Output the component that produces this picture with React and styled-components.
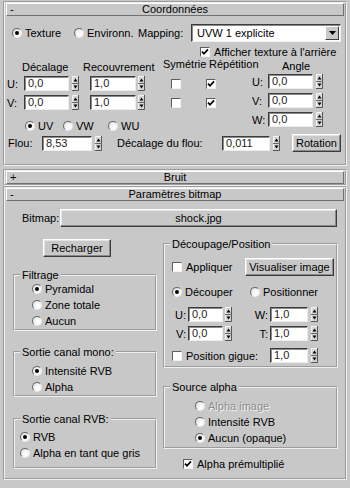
import React from 'react'
import styled, { createGlobalStyle } from 'styled-components'

const GlobalStyle = createGlobalStyle`
  html, body {
    margin: 0;
    padding: 0;
    background: #c8c8c8;
  }
  body {
    font-family: "Liberation Sans", Arial, sans-serif;
    font-size: 11px;
    color: #000;
  }
`

const Page = styled.div`
  width: 350px;
  height: 488px;
  box-sizing: border-box;
  padding: 1px 3px 0;
  background: #c8c8c8;
  overflow: hidden;
`

const Rollout = styled.section`
  border: 2px groove #f0f0f0;
  margin-top: ${p => p.$mt || 0}px;
  padding-bottom: ${p => p.$pb || 0}px;
`

const Header = styled.div`
  height: 13px;
  box-sizing: border-box;
  margin: 0 1px;
  border: 1px solid;
  border-color: #ffffff #707070 #707070 #ffffff;
  display: grid;
  grid-template-columns: 16px 1fr 16px;
  align-items: center;
  line-height: 11px;
`

const Sign = styled.span`
  padding-left: 3px;
`

const Title = styled.span`
  text-align: center;
`

const Row = styled.div`
  display: flex;
  align-items: ${p => p.$align || 'center'};
  height: ${p => p.$h}px;
  margin-top: ${p => p.$mt || 0}px;
`

const Block = styled.div`
  display: flex;
  flex-direction: column;
  width: ${p => (p.$w ? p.$w + 'px' : 'auto')};
  flex: none;
`

const Text = styled.span`
  display: inline-block;
  flex: none;
  width: ${p => (p.$w ? p.$w + 'px' : 'auto')};
  margin-left: ${p => p.$ml || 0}px;
  padding-top: ${p => p.$pt || 0}px;
  line-height: 12px;
  text-align: ${p => (p.$right ? 'right' : 'left')};
  white-space: nowrap;
`

const Option = styled.label`
  display: flex;
  align-items: center;
  gap: 3px;
  flex: none;
  width: ${p => (p.$w ? p.$w + 'px' : 'auto')};
  height: 14px;
  margin-left: ${p => p.$ml || 0}px;
  white-space: nowrap;
  color: ${p => (p.$disabled ? '#8e8e8e' : '#000')};
  text-shadow: ${p => (p.$disabled ? '1px 1px 0 #f4f4f4' : 'none')};
`

const Dot = styled.span`
  width: 10px;
  height: 10px;
  box-sizing: border-box;
  flex: none;
  border-radius: 50%;
  border: 1px solid;
  border-color: #6a6a6a #ececec #ececec #6a6a6a;
  background: radial-gradient(circle at 65% 65%, #ffffff 0, #f4f4f4 45%, #cfcfcf 100%);
  display: flex;
  align-items: center;
  justify-content: center;
  &::after {
    content: '';
    width: 4px;
    height: 4px;
    border-radius: 50%;
    background: #000;
    display: ${p => (p.$on ? 'block' : 'none')};
  }
`

const Box = styled.span`
  width: 10px;
  height: 10px;
  box-sizing: border-box;
  flex: none;
  margin-left: ${p => p.$ml || 0}px;
  background: #fff;
  border: 1px solid;
  border-color: #5e5e5e #f2f2f2 #f2f2f2 #5e5e5e;
  display: flex;
  align-items: center;
  justify-content: center;
`

const Field = styled.span`
  width: ${p => p.$w}px;
  height: 15px;
  box-sizing: border-box;
  flex: none;
  margin-left: ${p => p.$ml || 0}px;
  background: #fff;
  border: 1px solid;
  border-color: #3c3c3c #ececec #ececec #3c3c3c;
  box-shadow: inset 1px 1px 0 #8a8a8a;
  padding-left: 3px;
  line-height: 13px;
  color: #222;
`

const ArrowBox = styled.span`
  display: flex;
  flex: none;
  margin-left: ${p => p.$gap ?? 3}px;
`

const Button = styled.div`
  width: ${p => p.$w}px;
  height: ${p => p.$h || 18}px;
  box-sizing: border-box;
  flex: none;
  margin-left: ${p => p.$ml || 0}px;
  margin-top: ${p => p.$mt || 0}px;
  border: 1px solid;
  border-color: #ffffff #3c3c3c #3c3c3c #ffffff;
  box-shadow: inset -1px -1px 0 #8a8a8a, inset 1px 1px 0 #e4e4e4;
  display: flex;
  align-items: center;
  justify-content: center;
  white-space: nowrap;
`

const Select = styled.div`
  width: 150px;
  height: 18px;
  box-sizing: border-box;
  flex: none;
  display: flex;
  align-items: center;
  background: #fff;
  border: 1px solid;
  border-color: #3c3c3c #f0f0f0 #f0f0f0 #3c3c3c;
  box-shadow: inset 1px 1px 0 #8a8a8a;
`

const SelectValue = styled.span`
  flex: 1;
  padding-left: 5px;
`

const SelectButton = styled.span`
  width: 14px;
  height: 14px;
  box-sizing: border-box;
  margin-right: 1px;
  background: #c8c8c8;
  border: 1px solid;
  border-color: #ffffff #3c3c3c #3c3c3c #ffffff;
  display: flex;
  align-items: center;
  justify-content: center;
`

const Columns = styled.div`
  display: flex;
  gap: 6px;
  padding-left: 8px;
`

const Group = styled.fieldset`
  width: ${p => p.$w}px;
  box-sizing: border-box;
  min-width: 0;
  margin: ${p => p.$mt || 0}px 0 0 0;
  padding: ${p => p.$pt || 0}px 0 ${p => p.$pb || 0}px 0;
  border: 2px groove #f0f0f0;
`

const Legend = styled.legend`
  padding: 0 2px;
  margin-left: 5px;
  line-height: 12px;
  font-size: 11px;
`

function Radio({ on, disabled, label, w, ml }) {
  return (
    <Option $w={w} $ml={ml} $disabled={disabled}>
      <Dot $on={on} />
      {label}
    </Option>
  )
}

function CheckBox({ on, ml }) {
  return (
    <Box $ml={ml}>
      {on && (
        <svg width="8" height="8" viewBox="0 0 8 8">
          <path d="M1 3.6 L3 5.8 L7 1.4" stroke="#000" strokeWidth="1.7" fill="none" />
        </svg>
      )}
    </Box>
  )
}

function Checked({ on, label, w, ml }) {
  return (
    <Option $w={w} $ml={ml}>
      <CheckBox on={on} />
      <span style={{ marginLeft: 1 }}>{label}</span>
    </Option>
  )
}

function Spinner({ value, w, ml, gap }) {
  return (
    <>
      <Field $w={w} $ml={ml}>{value}</Field>
      <ArrowBox $gap={gap}>
        <svg width="7" height="15" viewBox="0 0 7 15">
          <rect x="0" y="0" width="7" height="15" fill="#d6d6d6" />
          <path d="M0.5 15V0.5H7" stroke="#f4f4f4" fill="none" />
          <path d="M0 14.5H6.5V0" stroke="#555" fill="none" />
          <path d="M0 7.5H7" stroke="#666" />
          <path d="M1.5 5.5L3.5 2.5L5.5 5.5Z" fill="#000" />
          <path d="M1.5 9.5L3.5 12.5L5.5 9.5Z" fill="#000" />
        </svg>
      </ArrowBox>
    </>
  )
}

function RolloutHeader({ open, title }) {
  return (
    <Header>
      <Sign>{open ? '-' : '+'}</Sign>
      <Title>{title}</Title>
      <span />
    </Header>
  )
}

function Coordinates() {
  return (
    <Rollout $pb={12}>
      <RolloutHeader open title="Coordonnées" />
      <Row $h={18} $mt={8}>
        <Radio on label="Texture" ml={7} w={62} />
        <Radio label="Environn." w={64} />
        <Text $w={53}>Mapping:</Text>
        <Select>
          <SelectValue>UVW 1 explicite</SelectValue>
          <SelectButton>
            <svg width="7" height="4" viewBox="0 0 7 4">
              <path d="M0 0H7L3.5 4Z" fill="#000" />
            </svg>
          </SelectButton>
        </Select>
      </Row>
      <Row $h={12} $mt={4}>
        <Checked on label="Afficher texture à l'arrière" ml={195} />
      </Row>
      <Row $h={74} $align="flex-start">
        <Block $w={240}>
          <Row $h={18} $align="flex-start">
            <Text $ml={17} $w={61} $pt={3}>Décalage</Text>
            <Text $w={80} $pt={3}>Recouvrement</Text>
            <Text $w={46}>Symétrie</Text>
            <Text>Répétition</Text>
          </Row>
          {[['U:', false], ['V:', false]].map(([axis, sym], i) => (
            <Row key={axis} $h={15} $mt={i ? 4 : 0}>
              <Text $ml={2} $w={17}>{axis}</Text>
              <Spinner value="0,0" w={45} gap={3} />
              <Spinner value="1,0" w={46} ml={11} gap={2} />
              <CheckBox on={sym} ml={26} />
              <CheckBox on ml={25} />
            </Row>
          ))}
          <Row $h={12} $mt={10}>
            <Radio on label="UV" ml={20} w={38} />
            <Radio label="VW" w={45} />
            <Radio label="WU" />
          </Row>
        </Block>
        <Block>
          <Row $h={12} $mt={2}>
            <Text $ml={37}>Angle</Text>
          </Row>
          {['U:', 'V:', 'W:'].map((axis, i) => (
            <Row key={axis} $h={15} $mt={i ? 4 : 2}>
              <Text $ml={7} $w={16}>{axis}</Text>
              <Spinner value="0,0" w={45} gap={3} />
            </Row>
          ))}
        </Block>
      </Row>
      <Row $h={18} $mt={2}>
        <Text $ml={3} $w={34}>Flou:</Text>
        <Spinner value="8,53" w={50} gap={3} />
        <Text $ml={15} $w={105}>Décalage du flou:</Text>
        <Spinner value="0,011" w={48} gap={3} />
        <Button $w={49} $ml={12}>Rotation</Button>
      </Row>
    </Rollout>
  )
}

function BitmapParams() {
  return (
    <Rollout $pb={7}>
      <RolloutHeader open title="Paramètres bitmap" />
      <Row $h={18} $mt={8}>
        <Text $ml={17} $w={38}>Bitmap:</Text>
        <Button $w={277}>shock.jpg</Button>
      </Row>
      <Columns>
        <Block $w={144}>
          <Button $w={68} $ml={30} $mt={12}>Recharger</Button>
          <Group $w={144} $mt={12}>
            <Legend>Filtrage</Legend>
            {['Pyramidal', 'Zone totale', 'Aucun'].map((l, i) => (
              <Row key={l} $h={16}>
                <Radio on={i === 0} label={l} ml={17} />
              </Row>
            ))}
          </Group>
          <Group $w={144} $mt={15} $pt={5}>
            <Legend>Sortie canal mono:</Legend>
            <Row $h={16}><Radio on label="Intensité RVB" ml={17} /></Row>
            <Row $h={16}><Radio label="Alpha" ml={17} /></Row>
          </Group>
          <Group $w={144} $mt={16} $pt={4} $pb={6}>
            <Legend>Sortie canal RVB:</Legend>
            <Row $h={16}><Radio on label="RVB" ml={5} /></Row>
            <Row $h={16}><Radio label="Alpha en tant que gris" ml={5} /></Row>
          </Group>
        </Block>
        <Block $w={175}>
          <Group $w={175} $mt={11} $pt={8} $pb={3}>
            <Legend>Découpage/Position</Legend>
            <Row $h={18}>
              <Checked label="Appliquer" ml={7} w={73} />
              <Button $w={89}>Visualiser image</Button>
            </Row>
            <Row $h={14} $mt={9}>
              <Radio on label="Découper" ml={7} w={78} />
              <Radio label="Positionner" />
            </Row>
            {[['U:', '0,0', 'W:'], ['V:', '0,0', 'T:']].map(([a, v, b], i) => (
              <Row key={a} $h={15} $mt={i ? 4 : 8}>
                <Text $w={21} $right>{a}</Text>
                <Spinner value={v} w={35} ml={2} gap={2} />
                <Text $w={36} $right>{b}</Text>
                <Spinner value="1,0" w={38} ml={2} gap={3} />
              </Row>
            ))}
            <Row $h={15} $mt={7}>
              <Checked label="Position gigue:" ml={7} w={98} />
              <Spinner value="1,0" w={38} gap={3} />
            </Row>
          </Group>
          <Group $w={175} $mt={13} $pt={5} $pb={1}>
            <Legend>Source alpha</Legend>
            <Row $h={16}><Radio disabled label="Alpha image" ml={30} /></Row>
            <Row $h={16}><Radio label="Intensité RVB" ml={30} /></Row>
            <Row $h={16}><Radio on label="Aucun (opaque)" ml={30} /></Row>
          </Group>
          <Row $h={14} $mt={8}>
            <Checked on label="Alpha prémultiplié" ml={20} />
          </Row>
        </Block>
      </Columns>
    </Rollout>
  )
}

export default function App() {
  return (
    <Page>
      <GlobalStyle />
      <Coordinates />
      <Rollout $mt={3}>
        <RolloutHeader title="Bruit" />
      </Rollout>
      <BitmapParams />
    </Page>
  )
}
